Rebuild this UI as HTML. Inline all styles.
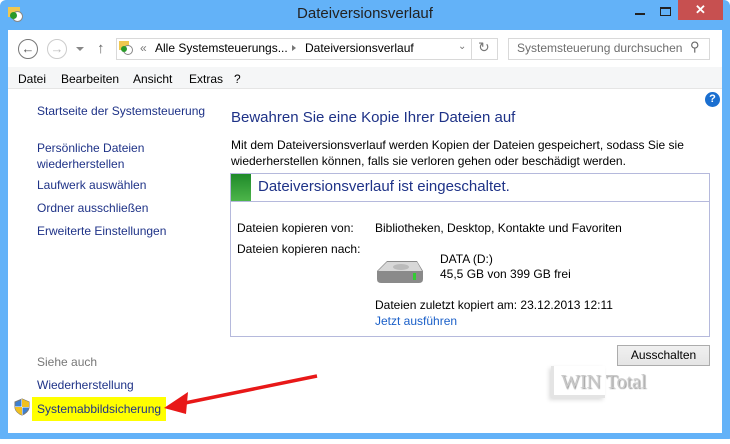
<!DOCTYPE html><html><head><style>
*{margin:0;padding:0;box-sizing:border-box}
body{width:730px;height:444px;background:#fff;font-family:"Liberation Sans",sans-serif;font-size:12px;color:#000;position:relative;overflow:hidden}
.a{position:absolute;white-space:nowrap}
.lnk{color:#1e3287}
</style></head><body>
<div class="a" style="left:0;top:0;width:730px;height:444px;background:#63b2f8;border-radius:6px"></div>
<div class="a" style="left:0;top:439px;width:730px;height:5px;background:#fff"></div>
<div class="a" style="left:8px;top:30px;width:714px;height:403px;background:#fff"></div>
<div class="a" style="left:8px;top:7px;width:12px;height:10px;background:#f0c850"></div>
<div class="a" style="left:12px;top:11px;width:11px;height:11px;border-radius:50%;background:#fff;border:1px solid #888"></div>
<div class="a" style="left:10px;top:12px;width:7px;height:7px;background:#2a9a2a;border-radius:50%"></div>
<div class="a" style="left:0;top:5px;width:730px;text-align:center;font-size:15px;color:#222">Dateiversionsverlauf</div>
<div class="a" style="left:635px;top:13px;width:10px;height:2px;background:#222"></div>
<div class="a" style="left:660px;top:7px;width:11px;height:9px;border:1px solid #222;border-top-width:2px"></div>
<div class="a" style="left:678px;top:0;width:45px;height:20px;background:#c75050;color:#fff;text-align:center;font-size:13px;line-height:20px;font-weight:bold">✕</div>
<div class="a" style="left:18px;top:39px;width:20px;height:20px;border:1.5px solid #777;border-radius:50%;text-align:center;line-height:17px;color:#555;font-size:13px">←</div>
<div class="a" style="left:47px;top:39px;width:20px;height:20px;border:1.5px solid #ccc;border-radius:50%;text-align:center;line-height:17px;color:#bbb;font-size:13px">→</div>
<div class="a" style="left:76px;top:47px;border:4px solid transparent;border-top-color:#888"></div>
<div class="a" style="left:97px;top:40px;font-size:15px;color:#666">↑</div>
<div class="a" style="left:116px;top:38px;width:382px;height:22px;border:1px solid #d9d9d9"></div>
<div class="a" style="left:471px;top:38px;width:1px;height:22px;background:#d9d9d9"></div>
<div class="a" style="left:119px;top:41px;width:10px;height:9px;background:#f0c850"></div>
<div class="a" style="left:123px;top:45px;width:10px;height:10px;border-radius:50%;background:#fff;border:1px solid #888"></div>
<div class="a" style="left:121px;top:46px;width:6px;height:6px;background:#2a9a2a;border-radius:50%"></div>
<div class="a" style="left:140px;top:41px;color:#777">«</div>
<div class="a" style="left:155px;top:41px">Alle Systemsteuerungs...</div>
<div class="a" style="left:292px;top:45px;border:3px solid transparent;border-left:4px solid #777"></div>
<div class="a" style="left:305px;top:41px">Dateiversionsverlauf</div>
<div class="a" style="left:458px;top:41px;color:#777;font-size:10px">⌄</div>
<div class="a" style="left:478px;top:39px;color:#777;font-size:14px">↻</div>
<div class="a" style="left:508px;top:38px;width:202px;height:22px;border:1px solid #d9d9d9"></div>
<div class="a" style="left:517px;top:41px;color:#6d6d6d">Systemsteuerung durchsuchen</div>
<div class="a" style="left:690px;top:39px;color:#666;font-size:13px">⚲</div>
<div class="a" style="left:8px;top:67px;width:714px;height:22px;background:#f5f6f7;border-bottom:1px solid #e5e5e5"></div>
<div class="a" style="left:18px;top:72px">Datei</div>
<div class="a" style="left:61px;top:72px">Bearbeiten</div>
<div class="a" style="left:133px;top:72px">Ansicht</div>
<div class="a" style="left:189px;top:72px">Extras</div>
<div class="a" style="left:234px;top:72px">?</div>
<div class="a lnk" style="left:37px;top:104px">Startseite der Systemsteuerung</div>
<div class="a lnk" style="left:37px;top:140px;line-height:16px">Persönliche Dateien<br>wiederherstellen</div>
<div class="a lnk" style="left:37px;top:178px">Laufwerk auswählen</div>
<div class="a lnk" style="left:37px;top:201px">Ordner ausschließen</div>
<div class="a lnk" style="left:37px;top:224px">Erweiterte Einstellungen</div>
<div class="a" style="left:37px;top:355px;color:#777">Siehe auch</div>
<div class="a lnk" style="left:37px;top:378px">Wiederherstellung</div>
<div class="a" style="left:32px;top:397px;width:134px;height:24px;background:#ffff00"></div>
<div class="a lnk" style="left:37px;top:402px">Systemabbildsicherung</div>
<svg class="a" style="left:14px;top:398px" width="16" height="18"><path d="M8 1L15 4V9C15 13 11 16 8 17C5 16 1 13 1 9V4Z" fill="#3c7fd0" stroke="#777"/><path d="M8 1V17M1 9H15" stroke="#fff"/><path d="M8 1L15 4V9H8Z" fill="#f0c020"/><path d="M1 9H8V17C5 16 1 13 1 9Z" fill="#f0c020"/></svg>
<svg class="a" style="left:160px;top:368px" width="165" height="50"><path d="M157 8L20 36" stroke="#e81818" stroke-width="3.5"/><path d="M4 40L28 24L26 46Z" fill="#e81818"/></svg>
<div class="a" style="left:705px;top:92px;width:15px;height:15px;border-radius:50%;background:#1b6fd0;color:#fff;font-weight:bold;font-size:11px;text-align:center;line-height:15px">?</div>
<div class="a" style="left:231px;top:109px;font-size:15px;color:#1e3287">Bewahren Sie eine Kopie Ihrer Dateien auf</div>
<div class="a" style="left:231px;top:137px;line-height:16px">Mit dem Dateiversionsverlauf werden Kopien der Dateien gespeichert, sodass Sie sie<br>wiederherstellen können, falls sie verloren gehen oder beschädigt werden.</div>
<div class="a" style="left:230px;top:173px;width:480px;height:164px;border:1px solid #b5b9dc"></div>
<div class="a" style="left:230px;top:201px;width:480px;height:1px;background:#b5b9dc"></div>
<div class="a" style="left:231px;top:174px;width:20px;height:27px;background:linear-gradient(#1f8a2a,#4db54a)"></div>
<div class="a" style="left:258px;top:178px;font-size:15px;color:#1e3287">Dateiversionsverlauf ist eingeschaltet.</div>
<div class="a" style="left:237px;top:221px">Dateien kopieren von:</div>
<div class="a" style="left:375px;top:221px">Bibliotheken, Desktop, Kontakte und Favoriten</div>
<div class="a" style="left:237px;top:242px">Dateien kopieren nach:</div>
<svg class="a" style="left:373px;top:259px" width="52" height="26"><path d="M4 12L14 2H44L50 12V20Q50 24 46 24H8Q4 24 4 20Z" fill="#8a8a8a"/><path d="M5 12L14 3H44L49 12Z" fill="#d8d8d8"/><ellipse cx="28" cy="8" rx="8" ry="3" fill="#bbb"/><rect x="40" y="14" width="3" height="7" fill="#3c3"/></svg>
<div class="a" style="left:440px;top:252px">DATA (D:)</div>
<div class="a" style="left:440px;top:267px">45,5 GB von 399 GB frei</div>
<div class="a" style="left:375px;top:298px">Dateien zuletzt kopiert am: 23.12.2013 12:11</div>
<div class="a" style="left:375px;top:314px;color:#1a5fc8">Jetzt ausführen</div>
<div class="a" style="left:617px;top:345px;width:93px;height:21px;border:1px solid #acacac;background:linear-gradient(#f0f0f0,#e5e5e5);text-align:center;line-height:19px">Ausschalten</div>
<div class="a" style="left:551px;top:366px;width:54px;height:32px;border-left:3px solid #e4e4e4;border-bottom:3px solid #e4e4e4;box-shadow:-2px 2px 4px #ddd"></div>
<div class="a" style="left:561px;top:371px;font-size:20px;color:#c8c8c8;font-family:'Liberation Serif',serif;text-shadow:1px 1px 1px #999">WIN Total</div>
</body></html>
